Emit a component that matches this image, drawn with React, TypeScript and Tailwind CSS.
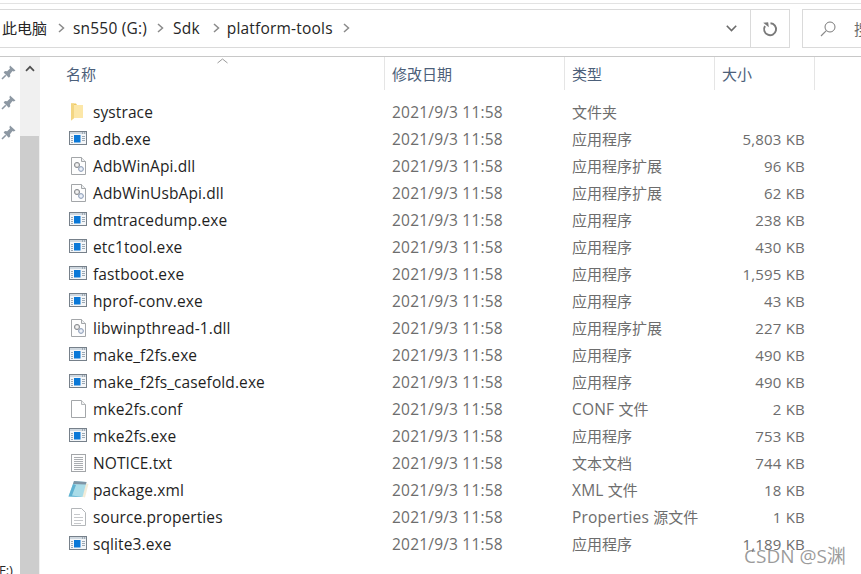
const FONT = "font-['Open_Sans','Noto_Sans_CJK_SC',sans-serif]";

function ExeIcon() {
  return (
    <svg width="18" height="15" viewBox="0 0 18 15" className="block">
      <rect x="0.5" y="0.5" width="17" height="13" fill="#f4f6f8" stroke="#76808a" />
      <rect x="1" y="1" width="16" height="2" fill="#cfd8e0" />
      <path d="M13 2h1M15 2h1" stroke="#76808a" />
      <rect x="5" y="4" width="6.5" height="7.5" fill="#0a78d7" />
      <path d="M2 5.5h2M2 7.5h2M2 9.5h2M2 11.5h2M13 5.5h3M13 7.5h3M13 9.5h3" stroke="#9aa8b5" />
    </svg>
  );
}
function DllIcon() {
  return (
    <svg width="15" height="18" viewBox="0 0 15 18" className="block">
      <path d="M0.5 0.5H10.5L14.5 4.5V17.5H0.5Z" fill="#fdfdfd" stroke="#a3a6a9" />
      <path d="M10.5 0.5V4.5H14.5" fill="#eef0f2" stroke="#a3a6a9" />
      <circle cx="6" cy="8" r="2.6" fill="#d8d8d8" stroke="#8d9094" />
      <circle cx="6" cy="8" r="0.9" fill="#fff" />
      <circle cx="10" cy="12" r="2.4" fill="#dfe7f3" stroke="#8b9bb5" />
      <circle cx="10" cy="12" r="0.8" fill="#fff" />
    </svg>
  );
}
function FileIcon() {
  return (
    <svg width="15" height="18" viewBox="0 0 15 18" className="block">
      <path d="M0.5 0.5H10.5L14.5 4.5V17.5H0.5Z" fill="#fff" stroke="#a3a6a9" />
      <path d="M10.5 0.5V4.5H14.5" fill="#f2f2f2" stroke="#b3b6b9" />
    </svg>
  );
}
function TxtIcon() {
  return (
    <svg width="15" height="18" viewBox="0 0 15 18" className="block">
      <rect x="0.5" y="0.5" width="14" height="17" fill="#fdfdfd" stroke="#a3a6a9" />
      <path d="M3 3.5h9M3 5.5h9M3 7.5h9M3 9.5h9M3 11.5h9M3 13.5h9M3 15.5h9" stroke="#a9acb0" />
    </svg>
  );
}
function PropsIcon() {
  return (
    <svg width="15" height="18" viewBox="0 0 15 18" className="block">
      <path d="M0.5 0.5H10.5L14.5 4.5V17.5H0.5Z" fill="#fff" stroke="#b3b6b9" />
      <path d="M3 6.5h6M3 9.5h9M3 12.5h9M3 15.5h7" stroke="#c6c8cb" />
    </svg>
  );
}
function XmlIcon() {
  return (
    <svg width="21" height="19" viewBox="0 0 21 19" className="block">
      <path d="M8 1.5L20.5 4L17 17.5L8 15Z" fill="#f3ecd8" />
      <path d="M6 1L18.5 2L14.5 17L0.5 16.5Z" fill="#a9dce8" />
      <path d="M6 1L18.5 2L17.8 4.5L5 4Z" fill="#7f95a5" />
      <path d="M0.5 16.5L5 4L8 5L4 15.5L14.5 17Z" fill="#5fb2d2" />
    </svg>
  );
}
function FolderIcon() {
  return (
    <svg width="12" height="18" viewBox="0 0 12 18" className="-ml-[2px] block">
      <path d="M0 0.5H5L6 2H12V15H3L0 17.5Z" fill="#f0ca60" />
      <path d="M3 2H12V15H3Z" fill="#fce7a8" />
      <path d="M0 0.5H3V15L0 17.5Z" fill="#f3d682" />
    </svg>
  );
}
function Pin() {
  return (
    <svg width="15" height="15" viewBox="0 0 15 15" className="block">
      <path d="M9 0.5L14.5 5.5L12.8 6.5L11.5 6L9 9.2L9.3 11.2L7.8 12.7L2.6 7.4L4 6L6.2 6.2L9 3.6L8.4 2.2Z" fill="#8d98a3" />
      <path d="M4.8 10.2L1 14" stroke="#8d98a3" strokeWidth="1.6" />
    </svg>
  );
}
function Chevron() {
  return (
    <svg width="7" height="10" viewBox="0 0 7 10" className="block">
      <path d="M1 1L5.5 5L1 9" fill="none" stroke="#8a8a8a" strokeWidth="1.5" />
    </svg>
  );
}

type Row = { icon: () => React.ReactElement; name: string; latin?: string; type: string; size: string };
const rows: Row[] = [
  { icon: FolderIcon, name: "systrace", type: "文件夹", size: "" },
  { icon: ExeIcon, name: "adb.exe", type: "应用程序", size: "5,803 KB" },
  { icon: DllIcon, name: "AdbWinApi.dll", type: "应用程序扩展", size: "96 KB" },
  { icon: DllIcon, name: "AdbWinUsbApi.dll", type: "应用程序扩展", size: "62 KB" },
  { icon: ExeIcon, name: "dmtracedump.exe", type: "应用程序", size: "238 KB" },
  { icon: ExeIcon, name: "etc1tool.exe", type: "应用程序", size: "430 KB" },
  { icon: ExeIcon, name: "fastboot.exe", type: "应用程序", size: "1,595 KB" },
  { icon: ExeIcon, name: "hprof-conv.exe", type: "应用程序", size: "43 KB" },
  { icon: DllIcon, name: "libwinpthread-1.dll", type: "应用程序扩展", size: "227 KB" },
  { icon: ExeIcon, name: "make_f2fs.exe", type: "应用程序", size: "490 KB" },
  { icon: ExeIcon, name: "make_f2fs_casefold.exe", type: "应用程序", size: "490 KB" },
  { icon: FileIcon, name: "mke2fs.conf", latin: "CONF ", type: "文件", size: "2 KB" },
  { icon: ExeIcon, name: "mke2fs.exe", type: "应用程序", size: "753 KB" },
  { icon: TxtIcon, name: "NOTICE.txt", type: "文本文档", size: "744 KB" },
  { icon: XmlIcon, name: "package.xml", latin: "XML ", type: "文件", size: "18 KB" },
  { icon: PropsIcon, name: "source.properties", latin: "Properties ", type: "源文件", size: "1 KB" },
  { icon: ExeIcon, name: "sqlite3.exe", type: "应用程序", size: "1,189 KB" },
];

function HeaderCell({ width, label }: { width: string; label: string }) {
  return (
    <div className={`${width} h-[33px] border-r border-[#e5e5e5] pt-[7px] text-[#4c607a]`}>{label}</div>
  );
}

const LATIN = "text-[15.5px] tracking-[0.2px]";

export default function App() {
  return (
    <div className={`${FONT} relative h-[574px] w-[861px] overflow-hidden bg-white text-[15px] leading-[20px]`}>
      <div className="h-[9px]">
        <div className="h-[4px] border-b border-[#e3e3e3]" />
      </div>
      <div className="flex h-[39px] items-stretch">
        <div className="flex w-[790px] items-center border-y border-r border-[#dadada]">
          <div className="flex flex-1 items-center pb-[2px] text-[#262626]">
            <span className="ml-[2px]">此电脑</span>
            <span className="ml-[11px]"><Chevron /></span>
            <span className={`ml-[8px] ${LATIN}`}>sn550 (G:)</span>
            <span className="ml-[10px]"><Chevron /></span>
            <span className={`ml-[9px] ${LATIN}`}>Sdk</span>
            <span className="ml-[13px]"><Chevron /></span>
            <span className={`ml-[7px] ${LATIN}`}>platform-tools</span>
            <span className="ml-[10px]"><Chevron /></span>
          </div>
          <div className="flex h-full w-[31px] items-center justify-start pl-[7px]">
            <svg width="11" height="7" viewBox="0 0 11 7" className="block shrink-0">
              <path d="M0.8 0.8L5.5 5.5L10.2 0.8" fill="none" stroke="#6b6b6b" strokeWidth="1.6" />
            </svg>
          </div>
          <div className="flex h-full w-[39px] items-center justify-center border-l border-[#dadada]">
            <svg width="16" height="16" viewBox="0 0 16 16" className="block">
              <path d="M8.5 2.2A6 6 0 1 1 3 5" fill="none" stroke="#7a7a7a" strokeWidth="1.9" />
              <path d="M1.5 1.5H6.5V6.5Z" fill="#7a7a7a" transform="rotate(-8 4 4)" />
            </svg>
          </div>
        </div>
        <div className="ml-[12px] flex flex-1 items-center overflow-hidden border-y border-l border-[#dadada] pl-[17px]">
          <svg width="16" height="16" viewBox="0 0 16 16" className="block shrink-0">
            <circle cx="10" cy="6" r="5" fill="none" stroke="#7a7a7a" strokeWidth="1" />
            <path d="M6.3 9.7L1 15" stroke="#8a8a8a" strokeWidth="1.2" />
          </svg>
          <span className="ml-[18px] whitespace-nowrap text-[#6d6d6d]">搜</span>
        </div>
      </div>
      <div className="h-[9px] border-b border-[#c8c8c8]" />
      <div className="flex h-[517px]">
        <div className="relative flex w-[20px] shrink-0 flex-col items-start gap-[15px] pl-[1px] pt-[8px]">
          <Pin /><Pin /><Pin />
          <span className="absolute bottom-[-6px] left-[-1px] whitespace-nowrap text-[13px] text-[#262626]">F:)</span>
        </div>
        <div className="flex w-[20px] shrink-0 flex-col border-r border-[#f0f0f0] bg-[#f0f0f0]">
          <div className="flex h-[20px] items-center justify-center pt-[3px]">
            <svg width="10" height="7" viewBox="0 0 10 7" className="block">
              <path d="M1 5.8L5 1.8L9 5.8" fill="none" stroke="#505050" strokeWidth="1.7" />
            </svg>
          </div>
          <div className="mt-[59px] flex-1 bg-[#cdcdcd]" />
        </div>
        <div className="min-w-0 flex-1 pl-[1px]">
          <div className="relative flex h-[41px] items-start">
            <svg width="11" height="6" viewBox="0 0 11 6" className="absolute left-[176px] top-[1px] block">
              <path d="M0.5 5L5.5 1L10.5 5" fill="none" stroke="#9a9a9a" strokeWidth="1" />
            </svg>
            <HeaderCell width="w-[344px] pl-[25px]" label="名称" />
            <HeaderCell width="w-[180px] pl-[7px]" label="修改日期" />
            <HeaderCell width="w-[150px] pl-[7px]" label="类型" />
            <HeaderCell width="w-[100px] pl-[7px]" label="大小" />
          </div>
          {rows.map((r) => (
            <div key={r.name} className="flex h-[27px] items-center whitespace-nowrap">
              <div className="flex w-[343px] items-center text-[15.5px] tracking-[0.1px] text-[#1f1f1f]">
                <div className="flex w-[52px] shrink-0 justify-end pr-[4px]">
                  <div className="flex w-[22px] justify-center"><r.icon /></div>
                </div>
                <span>{r.name}</span>
              </div>
              <div className={`w-[180px] pl-[8px] text-[#6d6d6d] ${LATIN}`}>2021/9/3 11:58</div>
              <div className="w-[150px] pl-[8px] text-[#6d6d6d]">
                {r.latin && <span className={LATIN}>{r.latin}</span>}
                {r.type}
              </div>
              <div className="w-[91px] text-right text-[15px] tracking-[0.2px] text-[#6d6d6d]">{r.size}</div>
            </div>
          ))}
        </div>
      </div>
      <div className="absolute left-[744px] top-[543px] whitespace-nowrap text-[19px] leading-[26px] text-[#7a7a7a]/75">CSDN @S渊</div>
    </div>
  );
}
